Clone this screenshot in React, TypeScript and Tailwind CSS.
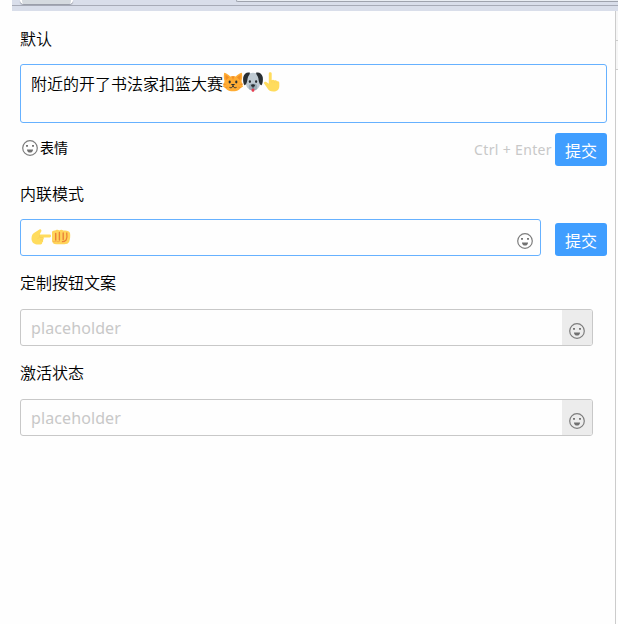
import type { ReactNode } from 'react';

function Smile() {
  return (
    <svg viewBox="0 0 16 16" className="block h-4 w-4 shrink-0" fill="none">
      <circle cx="8" cy="8" r="7.300" stroke="#7d7d7d" strokeWidth="1.200" />
      <path d="M4 5h2v1.800H4zM10 5h2v1.800h-2z" fill="#777" />
      <path d="M5 9.400h6c0 1.900-1.200 3.200-3 3.200S5 11.300 5 9.400z" fill="#707070" />
    </svg>
  );
}

function Cat() {
  return (
    <svg viewBox="0 0 20 20" className="block h-5 w-5 shrink-0">
      <path d="M1.200.8C3.300 1.200 5.800 2.800 7.200 4.600c1.800-.5 3.800-.5 5.600 0C14.200 2.800 16.700 1.200 18.800.8c.6 2.700.5 5.700-.3 8.200.3 1.800.8 3.500 1.500 5.800-2 .7-2.500 1.800-4 2.900-1.700 1.100-3.700 1.600-6 1.600s-4.300-.5-6-1.600c-1.500-1.100-2-2.200-4-2.900.7-2.300 1.200-4 1.500-5.800C.7 6.500.6 3.500 1.200.8z" fill="#ffac33" />
      <path d="M2.500 2.800c1.500.6 2.700 1.500 3.500 2.700L2.900 8.200c-.5-1.700-.7-3.600-.4-5.400zM17.500 2.800c-1.500.6-2.700 1.500-3.500 2.700l3.100 2.700c.5-1.700.7-3.600.4-5.400zM8.500 4.300h3L10 8z" fill="#f18f26" />
      <path d="M0 11.500l4 .8-3.500.8zM20 11.500l-4 .8 3.500.8zM1 15.800l3.500-1.200v1.200zM19 15.800l-3.500-1.200v1.200z" fill="#f18f26" />
      <ellipse cx="6.700" cy="10" rx="1.100" ry="1.400" fill="#292f33" />
      <ellipse cx="13.300" cy="10" rx="1.100" ry="1.400" fill="#292f33" />
      <path d="M7.800 12h4.400L10 14z" fill="#292f33" />
      <path d="M6.500 15.400c1.500.7 3 .2 3.500-1.500.5 1.700 2 2.200 3.500 1.500" fill="none" stroke="#292f33" strokeWidth="1" />
    </svg>
  );
}

function Dog() {
  return (
    <svg viewBox="0 0 20 20" className="block h-5 w-5 shrink-0">
      <path d="M10 .8c4.500 0 7.500 3.500 7.500 8.200 0 5-2.500 9.500-7.500 9.500S2.500 14 2.500 9C2.500 4.300 5.500.8 10 .8z" fill="#bfcad2" />
      <path d="M7 .8C4-.2 1 1.600.3 5.100-.2 7.600.2 11.600 1.500 13.300c2.300-.7 2.700-4.300 3.100-6.800C5 4 6.800 2.800 7 .8zM13 .8c3-1 6 .8 6.700 4.300.5 2.500.1 6.500-1.200 8.200-2.300-.7-2.700-4.300-3.100-6.800C15 4 13.200 2.800 13 .8z" fill="#292f33" />
      <ellipse cx="10" cy="15" rx="4.300" ry="3.600" fill="#9aabb6" />
      <ellipse cx="6.900" cy="9.600" rx="1.100" ry="1.400" fill="#292f33" />
      <ellipse cx="13.100" cy="9.600" rx="1.100" ry="1.400" fill="#292f33" />
      <ellipse cx="10" cy="13.600" rx="2" ry="1.400" fill="#292f33" />
      <path d="M10 15v1.500" stroke="#292f33" strokeWidth=".8" />
      <path d="M8.600 16.800h2.800v1.400c0 2.200-2.800 2.200-2.800 0z" fill="#e83d4f" />
    </svg>
  );
}

function PointUp() {
  return (
    <svg viewBox="0 0 20 20" className="-ml-px block h-5 w-5 shrink-0">
      <path d="M6.800 1.600c0-1.900 2.900-1.900 2.900 0v6.600c1-.9 2.300-.6 2.700.4 1-.7 2.200-.2 2.500.7 1.200-.4 2.400.3 2.400 1.500v3.400c0 3.300-2.500 5.300-5.900 5.300-3.200 0-4.600-1.100-6-3.200l-3.300-4.700c-.7-1.200.8-2.600 2.200-1.600l2.500 1.800z" fill="#ffdc5d" />
      <path d="M9.700 8.300v2.500M12.400 8.800v2.200M14.900 9.500v1.700" fill="none" stroke="#f8d05a" strokeWidth=".5" />
    </svg>
  );
}

function PointRight() {
  return (
    <svg viewBox="0 0 20 20" className="block h-5 w-5 shrink-0">
      <path d="M18.600 7.500c1.900 0 1.900 2.900 0 2.900h-6.200c.8 1 .5 2.200-.5 2.600.6 1 .1 2.100-.8 2.400.3 1.200-.4 2-1.600 2H5.800C2.500 17.400.5 15 .5 11.600c0-3.200 1.100-4.700 3.200-6.100l4.700-3c1.400-.7 2.700.9 1.700 2.300L8.600 7.500z" fill="#ffdc5d" />
      <path d="M12.300 10.400H9M11.800 13H9.200M8.600 7.500c.6 2.200-.4 3.600-2 4" fill="none" stroke="#f5c955" strokeWidth=".6" />
    </svg>
  );
}

function Fist() {
  return (
    <svg viewBox="0 0 20 20" className="block h-5 w-5 shrink-0">
      <path d="M1 5.200c0-1.200 1.700-2 3.200-1.700.6-1 3.200-1.100 4.100-.1 1-.9 3.200-.8 4 .2 3.300-.5 6.200.4 6.700 2.400.5 2.300.2 6.500-.8 8.800-.7 1.700-2.500 2.500-5 2.500H5.400C2.500 17.300 1 15.800 1 12.800z" fill="#ffd45a" />
      <path d="M4.700 6.500v6.500M8.400 5.500v7.500M12.200 6v6.500" fill="none" stroke="#ea8238" strokeWidth="1.400" strokeLinecap="round" />
      <path d="M15.700 5.500c.5 3 .3 5.700-.6 7.500-1.200 1.300-2.600 1.800-4.200 1.700" fill="none" stroke="#ea8238" strokeWidth="1.300" />
      <path d="M1.500 14c1.400.9 2.900.9 3.700-.1 1 1.100 2.700 1.100 3.700.1" fill="none" stroke="#f3ad4b" strokeWidth=".9" />
    </svg>
  );
}

function Submit() {
  return (
    <button className="h-[33px] w-[52px] shrink-0 rounded-[3px] bg-[#409eff] pt-0.5 text-base leading-none text-white">提交</button>
  );
}

function Label({ children }: { children: ReactNode }) {
  return <h2 className="h-6 text-base font-[350]">{children}</h2>;
}

function PlaceholderField() {
  return (
    <div className="mt-3.5 flex h-[37px] w-[573px] overflow-hidden rounded-[3px] border border-[#c8c8c8]">
      <input
        className="min-w-0 flex-1 bg-transparent px-2.5 text-base tracking-[0.1px] text-[#333] outline-none placeholder:text-[#c8c8c8]"
        placeholder="placeholder"
      />
      <button className="flex w-[30px] items-center justify-center bg-[#ececec] pt-1.5">
        <Smile />
      </button>
    </div>
  );
}

export default function App() {
  return (
    <div className="flex h-[624px] w-[618px] flex-col overflow-hidden bg-[#fefefe] font-['Noto_Sans','Noto_Sans_CJK_SC',sans-serif] text-black">
      <header className="ml-3 h-[11px] shrink-0 bg-[#d9deea]">
        <div className="flex h-1.5 items-start justify-between border-b border-[#a7abb7] pl-2">
          <div className="h-1 w-[53px] rounded-b-sm border-x-2 border-white bg-[#d5dadf] shadow-[0_1px_1px_#9498a4]" />
          <div className="h-0.5 w-[382px] rounded-bl border-b border-l border-[#9fa3ad] bg-[#e9edf3]" />
        </div>
      </header>
      <div className="flex min-h-0 flex-1">
        <main className="w-[604px] shrink-0 grow border-r border-[#ccc] pr-2 pl-5">
          <section className="pt-4">
            <Label>默认</Label>
            <div className="mt-[13px] flex h-[59px] items-start rounded-[3px] border border-[#66b1ff] px-2.5 pt-[7px]">
              <span className="text-base leading-6 font-[350]">附近的开了书法家扣篮大赛</span>
              <Cat />
              <Dog />
              <PointUp />
            </div>
            <div className="mt-2.5 flex h-[33px] items-center justify-between">
              <button className="flex items-center gap-0.5 pb-1 pl-0.5 text-sm leading-5">
                <Smile />
                表情
              </button>
              <div className="flex items-center gap-[3px]">
                <span className="text-sm tracking-[0.35px] text-[#c8c8c8]">Ctrl + Enter</span>
                <Submit />
              </div>
            </div>
          </section>
          <section className="pt-4">
            <Label>内联模式</Label>
            <div className="mt-[13px] flex items-end justify-between">
              <div className="flex h-[37px] w-[521px] items-start rounded-[3px] border border-[#66b1ff] pt-[7px] pr-[7px] pl-2.5">
                <PointRight />
                <Fist />
                <button className="mt-[6px] ml-auto">
                  <Smile />
                </button>
              </div>
              <Submit />
            </div>
          </section>
          <section className="pt-[15px]">
            <Label>定制按钮文案</Label>
            <PlaceholderField />
          </section>
          <section className="pt-[15px]">
            <Label>激活状态</Label>
            <PlaceholderField />
          </section>
        </main>
        <aside className="w-0.5 shrink-0">
          <div className="h-[30px] border-b border-[#ccc] bg-[#f6f6f6]" />
          <div className="h-[29px] border-b border-[#ccc] bg-[#f6f6f6]" />
        </aside>
      </div>
    </div>
  );
}
